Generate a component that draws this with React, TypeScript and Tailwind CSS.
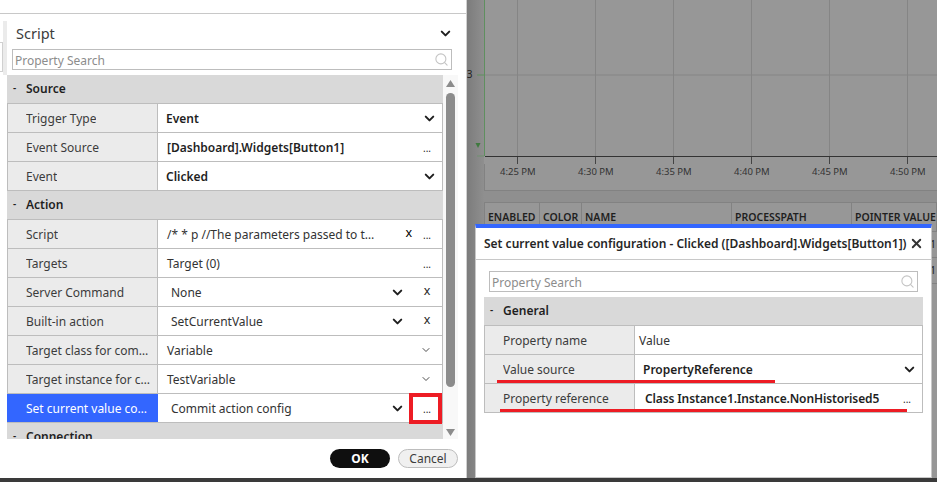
import { ChevronDown, Search, X } from "lucide-react";
import type { ReactNode } from "react";

const font = "font-['Noto_Sans',sans-serif]";

function Dots() {
  return <span className="w-[30px] shrink-0 text-center text-[10px] leading-none pt-[1px] text-[#262626]">...</span>;
}

function Cross() {
  return <span className="w-[30px] shrink-0 text-center text-[12.5px] leading-none -mt-[2px] text-[#262626]">x</span>;
}

function Chevron({ thin }: { thin?: boolean }) {
  return (
    <ChevronDown
      size={thin ? 12 : 15}
      strokeWidth={thin ? 1.75 : 3.2}
      className={thin ? "text-[#333] shrink-0 -mt-[1px]" : "text-[#1f1f1f] shrink-0 -mt-[1px]"}
    />
  );
}

type RowProps = {
  label: string;
  active?: boolean;
  children: ReactNode;
};

function Row({ label, active, children }: RowProps) {
  return (
    <div className="flex h-[29px] border-b border-[#bdbdbd]">
      <div
        className={
          active
            ? "w-[151px] shrink-0 flex items-center pt-[1px] pl-[19px] pr-[8px] bg-[#3366ff] text-white"
            : "w-[151px] shrink-0 flex items-center pt-[1px] pl-[18px] pr-[3px] bg-[#ebebeb] text-[#3c3c3c] border-l border-r border-[#bdbdbd]"
        }
      >
        <span className="truncate">{label}</span>
      </div>
      <div className="flex-1 min-w-0 flex items-center pt-[1px] bg-white border-r border-[#bdbdbd]">{children}</div>
    </div>
  );
}

function Section({ title }: { title: string }) {
  return (
    <div className="flex items-center h-[29px] bg-[#d9d9d9] border-b border-[#bdbdbd] font-semibold text-[#1f1f1f]">
      <span className="w-[19px] pl-[6px] text-[10px] leading-none -mt-[3px]">-</span>
      {title}
    </div>
  );
}

function SearchBox({ className }: { className: string }) {
  return (
    <div className={`flex items-center justify-between h-[21px] pt-[3px] border border-[#bdbdbd] bg-white pl-[2px] pr-[2px] text-[#8c8c8c] ${className}`}>
      <span>Property Search</span>
      <Search size={15} strokeWidth={1.75} className="text-[#c4c4c4] -mt-[3px]" />
    </div>
  );
}

function Triangle({ down }: { down?: boolean }) {
  return (
    <svg width="9" height="7" viewBox="0 0 9 7" className="shrink-0">
      <polygon points={down ? "0,0 9,0 4.5,7" : "4.5,0 9,7 0,7"} fill="#8c8c8c" />
    </svg>
  );
}

function ScriptPanel() {
  return (
    <div className="relative w-[467px] shrink-0 bg-white h-[478px] flex flex-col border-r border-[#d0d0d0]">
      <div className="h-[14px] shrink-0 border-b border-[#c8c8c8] flex justify-end overflow-hidden pr-[8px]">
        <X size={12} strokeWidth={3} className="-mt-[10px] text-[#333]" />
      </div>
      <div className="absolute left-[3px] top-[21px] w-[4px] h-[54px] bg-[#ebebeb]" />
      <div className="absolute left-0 top-[42px] w-[3px] h-[30px] border-y border-r border-[#d0d0d0]" />

      <div className="flex items-center justify-between h-[35px] shrink-0 pt-[4px] pl-[16px] pr-[13px]">
        <span className="text-[14.5px] text-[#3c3c3c]">Script</span>
        <Chevron />
      </div>
      <SearchBox className="mx-[12px] w-[440px] shrink-0" />

      <div className="flex h-[364px] mt-[5px] ml-[7px] shrink-0">
        <div className="w-[436px] shrink-0 overflow-hidden">
          <Section title="Source" />
          <Row label="Trigger Type">
            <span className="flex-1 pl-[8px] font-semibold text-[#1f1f1f]">Event</span>
            <span className="pr-[5px]"><Chevron /></span>
          </Row>
          <Row label="Event Source">
            <span className="flex-1 pl-[9px] font-semibold text-[#1f1f1f]">[Dashboard].Widgets[Button1]</span>
            <Dots />
          </Row>
          <Row label="Event">
            <span className="flex-1 pl-[8px] font-semibold text-[#1f1f1f]">Clicked</span>
            <span className="pr-[5px]"><Chevron /></span>
          </Row>
          <Section title="Action" />
          <Row label="Script">
            <span className="w-[218px] pl-[9px] truncate text-[#333]">/* * p //The parameters passed to the script</span>
            <span className="w-[36px] text-right text-[12.5px] leading-none -mt-[2px]">x</span>
            <span className="flex-1" />
            <Dots />
          </Row>
          <Row label="Targets">
            <span className="flex-1 pl-[9px] text-[#333]">Target (0)</span>
            <Dots />
          </Row>
          <Row label="Server Command">
            <span className="flex-1 pl-[13px] text-[#333]">None</span>
            <Chevron />
            <span className="w-[7px]" />
            <Cross />
          </Row>
          <Row label="Built-in action">
            <span className="flex-1 pl-[13px] text-[#333]">SetCurrentValue</span>
            <Chevron />
            <span className="w-[7px]" />
            <Cross />
          </Row>
          <Row label="Target class for communication">
            <span className="flex-1 pl-[9px] text-[#333]">Variable</span>
            <span className="pr-[10px]"><Chevron thin /></span>
          </Row>
          <Row label="Target instance for communication">
            <span className="flex-1 pl-[9px] text-[#333]">TestVariable</span>
            <span className="pr-[10px]"><Chevron thin /></span>
          </Row>
          <Row label="Set current value configuration" active>
            <span className="flex-1 pl-[13px] text-[#333]">Commit action config</span>
            <Chevron />
            <span className="w-[7px]" />
            <Dots />
          </Row>
          <Section title="Connection" />
        </div>
        <div className="w-[15px] shrink-0 bg-[#f8f8f8] flex flex-col items-center pt-[5px] pb-[3px]">
          <Triangle />
          <div className="w-[9px] h-[294px] mt-[6px] rounded-[5px] bg-[#8c8c8c]" />
          <div className="flex-1" />
          <Triangle down />
        </div>
      </div>

      <div className="flex-1 flex items-center justify-end gap-[8px] pr-[8px]">
        <button className="w-[60px] h-[19px] rounded-full bg-[#0f0f0f] text-white font-bold">OK</button>
        <button className="w-[60px] h-[19px] rounded-full bg-[#f0f0f0] border border-[#bdbdbd] text-[#3c3c3c]">Cancel</button>
      </div>

      {/* red annotation round the ... button */}
      <div className="absolute left-[409px] top-[393px] w-[33px] h-[31px] border-[4px] border-[#ed1c24]" />
    </div>
  );
}

const times = ["4:25 PM", "4:30 PM", "4:35 PM", "4:40 PM", "4:45 PM", "4:50 PM"];
const ticks = [517, 595, 673, 751, 829, 907];

function ChartBackdrop() {
  return (
    <div className="flex-1 min-w-0 bg-[#979797] overflow-hidden flex h-[478px]">
      <div className="relative w-[17px] shrink-0 overflow-hidden bg-gradient-to-r from-[#7c7c7c] to-[#8f8f8f]">
        <span className="absolute left-[-6px] top-[69px] text-[10px] leading-none text-[#222]">13</span>
        <svg width="17" height="160" viewBox="0 0 17 160" className="block">
          <line x1="10" y1="75" x2="17" y2="75" stroke="#5f8f5f" strokeWidth="1" />
          <polygon points="8.5,143 13.5,143 11,148" fill="#3f7a3f" />
          <line x1="10" y1="156" x2="17" y2="156" stroke="#6f8f6f" strokeWidth="1" />
        </svg>
      </div>
      <div className="flex-1 min-w-0 flex flex-col">
        <svg width="453" height="164" viewBox="484 0 453 164" className="shrink-0 block">
          <line x1="484.5" y1="0" x2="484.5" y2="156" stroke="#5f8f5f" strokeWidth="1" />
          <line x1="485" y1="75" x2="937" y2="75" stroke="#858585" strokeWidth="1" />
          {ticks.map((x) => (
            <g key={x}>
              <line x1={x + 0.5} y1="0" x2={x + 0.5} y2="156" stroke="#858585" strokeWidth="1" />
              <line x1={x + 0.5} y1="156" x2={x + 0.5} y2="164" stroke="#444" strokeWidth="1" />
            </g>
          ))}
          <line x1="485" y1="156.5" x2="937" y2="156.5" stroke="#333" strokeWidth="1" />
        </svg>
        <div className="h-[27px] shrink-0 border-l border-b border-[#828282] flex text-[9.5px] text-[#333] pl-[32px]">
          {times.map((t) => (
            <div key={t} className="w-[78px] shrink-0 relative">
              <span className="absolute left-[-17px] top-[1px] whitespace-nowrap">{t}</span>
            </div>
          ))}
        </div>
        <div className="h-[11px] shrink-0 bg-[#8f8f8f]" />
        <div className="flex h-[30px] shrink-0 border border-[#828282] font-semibold text-[10.5px] text-[#1f1f1f]">
          <div className="w-[55px] shrink-0 border-r border-[#828282] pl-[3px] pt-[7px]">ENABLED</div>
          <div className="w-[42px] shrink-0 border-r border-[#828282] pl-[3px] pt-[7px]">COLOR</div>
          <div className="w-[150px] shrink-0 border-r border-[#828282] pl-[3px] pt-[7px]">NAME</div>
          <div className="w-[120px] shrink-0 border-r border-[#828282] pl-[3px] pt-[7px]">PROCESSPATH</div>
          <div className="flex-1 pl-[3px] pt-[7px] whitespace-nowrap">POINTER VALUE</div>
        </div>
        <div className="flex justify-end h-[26px] shrink-0 border-b border-[#828282] text-[10.5px] text-[#222] pr-[1px] pt-[5px]">1</div>
        <div className="flex justify-end h-[26px] shrink-0 border-b border-[#828282] text-[10.5px] text-[#222] pr-[1px] pt-[5px]">1</div>
      </div>
    </div>
  );
}

function ValueDialog() {
  return (
    <div className="absolute left-[475px] top-[224px] w-[457px] h-[254px] bg-white border border-[#c8c8c8] border-t-[4px] border-t-[#3366ff] flex flex-col">
      <div className="flex items-center justify-between h-[32px] shrink-0 border-b border-[#c8c8c8] pl-[8px] pr-[7px] font-semibold text-[#262626]">
        <span className="whitespace-nowrap">Set current value configuration - Clicked ([Dashboard].Widgets[Button1])</span>
        <X size={15} strokeWidth={3} className="text-[#333] shrink-0" />
      </div>
      <SearchBox className="mt-[11px] ml-[13px] w-[429px] shrink-0" />
      <div className="ml-[8px] mt-[5px] w-[439px]">
        <Section title="General" />
        <Row label="Property name">
          <span className="pl-[4px] text-[#333]">Value</span>
        </Row>
        <Row label="Value source">
          <span className="flex-1 pl-[8px] font-semibold text-[#1f1f1f]">PropertyReference</span>
          <span className="pr-[5px]"><Chevron /></span>
        </Row>
        <Row label="Property reference">
          <span className="flex-1 pl-[10px] font-semibold text-[#1f1f1f] whitespace-nowrap tracking-[-0.12px]">Class Instance1.Instance.NonHistorised5</span>
          <Dots />
        </Row>
      </div>
      {/* red underlines drawn over the screenshot */}
      <div className="absolute left-[21px] top-[152px] w-[278px] h-[3px] bg-[#ed1c24]" />
      <div className="absolute left-[24px] top-[181px] w-[407px] h-[3px] bg-[#ed1c24]" />
    </div>
  );
}

export default function App() {
  return (
    <div className={`relative w-[937px] h-[482px] overflow-hidden bg-[#3a3a3a] text-[12px] ${font}`}>
      <div className="flex">
        <ScriptPanel />
        <ChartBackdrop />
      </div>
      <ValueDialog />
    </div>
  );
}
